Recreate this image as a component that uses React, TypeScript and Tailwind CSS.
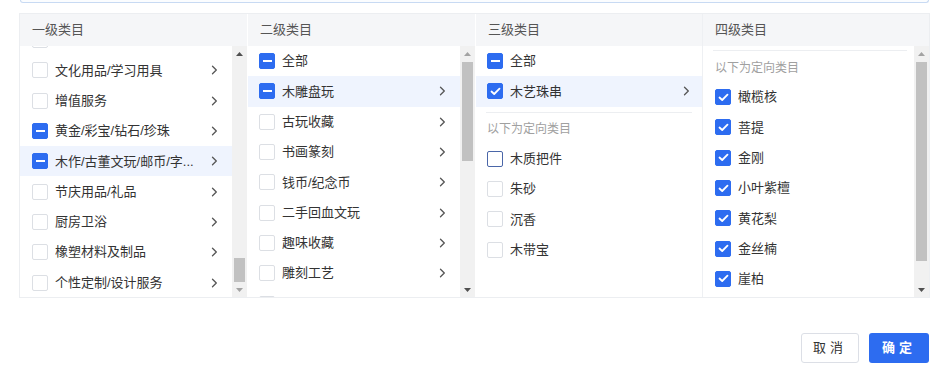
import React from 'react';

type CheckState = 'none' | 'half' | 'full' | 'hover';

type Item = {
  label: string;
  state: CheckState;
  arrow?: boolean;
  active?: boolean;
  title?: string;
};

const BLUE = 'bg-[#2d6cf0] border-[#2d6cf0]';

const CheckBox = ({ state }: { state: CheckState }) => {
  if (state === 'full') {
    return (
      <span className={`flex h-[16px] w-[16px] shrink-0 items-center justify-center rounded-[2px] border ${BLUE}`}>
        <svg width="11" height="9" viewBox="0 0 11 9" fill="none">
          <polyline points="1.5,4.5 4.2,7 9.5,1.6" stroke="#fff" strokeWidth="1.8" strokeLinecap="round" strokeLinejoin="round" />
        </svg>
      </span>
    );
  }
  if (state === 'half') {
    return (
      <span className={`flex h-[16px] w-[16px] shrink-0 items-center justify-center rounded-[2px] border ${BLUE}`}>
        <span className="h-[2px] w-[9px] bg-white" />
      </span>
    );
  }
  return (
    <span
      className={`h-[16px] w-[16px] shrink-0 rounded-[2px] border bg-white ${
        state === 'hover' ? 'border-[#4a66a8]' : 'border-[#dcdfe4]'
      }`}
    />
  );
};

const Chevron = () => (
  <svg width="7" height="10" viewBox="0 0 7 10" fill="none" className="shrink-0">
    <polyline points="1.5,1.2 5.3,5 1.5,8.8" stroke="#555" strokeWidth="1.3" strokeLinecap="round" strokeLinejoin="round" />
  </svg>
);

const Row = ({ item, pl = 'pl-[12px]', pr = 'pr-[14px]' }: { item: Item; pl?: string; pr?: string }) => (
  <div title={item.title} className={`flex h-[30.3px] items-center ${pl} ${pr} ${item.active ? 'bg-[#eff4fe]' : ''}`}>
    <CheckBox state={item.state} />
    <span className="ml-[7px] min-w-0 flex-1 truncate pr-[9px] text-[13px] text-[#333]">{item.label}</span>
    {item.arrow && <Chevron />}
  </div>
);

const Arrow = ({ up, dark }: { up?: boolean; dark?: boolean }) => (
  <div className="flex h-[15px] items-center justify-center">
    <svg width="7" height="4" viewBox="0 0 7 4">
      <polygon points={up ? '0,4 3.5,0 7,4' : '0,0 7,0 3.5,4'} fill={dark ? '#505050' : '#a3a3a3'} />
    </svg>
  </div>
);

// classic scrollbar; thumb placed by its top offset inside the track
const ScrollBar = ({ top, size, upDark, downDark }: { top: string; size: string; upDark?: boolean; downDark?: boolean }) => (
  <div className="flex w-[15px] shrink-0 flex-col bg-[#f1f1f1]">
    <Arrow up dark={upDark} />
    <div className="flex-1 px-[2px]">
      <div className={`${top} ${size} bg-[#c1c1c1]`} />
    </div>
    <Arrow dark={downDark} />
  </div>
);

const TargetLabel = () => (
  <div className="flex h-[31px] items-center pt-[2px] text-[12px] text-[#a0a0a0]">以下为定向类目</div>
);

const level1: Item[] = [
  { label: '', state: 'none' },
  { label: '文化用品/学习用具', state: 'none', arrow: true },
  { label: '增值服务', state: 'none', arrow: true },
  { label: '黄金/彩宝/钻石/珍珠', state: 'half', arrow: true },
  { label: '木作/古董文玩/邮币/字...', title: '木作/古董文玩/邮币/字画', state: 'half', arrow: true, active: true },
  { label: '节庆用品/礼品', state: 'none', arrow: true },
  { label: '厨房卫浴', state: 'none', arrow: true },
  { label: '橡塑材料及制品', state: 'none', arrow: true },
  { label: '个性定制/设计服务', state: 'none', arrow: true },
];

const level2: Item[] = [
  { label: '全部', state: 'half' },
  { label: '木雕盘玩', state: 'half', arrow: true, active: true },
  { label: '古玩收藏', state: 'none', arrow: true },
  { label: '书画篆刻', state: 'none', arrow: true },
  { label: '钱币/纪念币', state: 'none', arrow: true },
  { label: '二手回血文玩', state: 'none', arrow: true },
  { label: '趣味收藏', state: 'none', arrow: true },
  { label: '雕刻工艺', state: 'none', arrow: true },
  { label: '', state: 'none' },
];

const level3Top: Item[] = [
  { label: '全部', state: 'half' },
  { label: '木艺珠串', state: 'full', arrow: true, active: true },
];

const level3Target: Item[] = [
  { label: '木质把件', state: 'hover' },
  { label: '朱砂', state: 'none' },
  { label: '沉香', state: 'none' },
  { label: '木带宝', state: 'none' },
];

const level4: Item[] = ['橄榄核', '菩提', '金刚', '小叶紫檀', '黄花梨', '金丝楠', '崖柏'].map((label) => ({
  label,
  state: 'full' as CheckState,
}));

const Header = ({ title }: { title: string }) => (
  <div className="flex h-[32px] shrink-0 items-center bg-[#f5f6f8] pl-[12px] text-[13px] text-[#555]">{title}</div>
);

export default function App() {
  return (
    <div
      className="h-[374px] w-[951px] overflow-hidden bg-white"
      style={{ fontFamily: '"Liberation Sans", "Noto Sans CJK SC", sans-serif' }}
    >
      {/* bottom of the input above */}
      <div className="ml-[20px] h-[3px] w-[909px] rounded-b-[3px] border-x border-b border-[#c8daf3] bg-[#fbfdff]" />

      <div className="ml-[19px] mt-[10px] flex w-[911px] border border-[#eceef1]">
        {/* 一级 */}
        <div className="flex w-[228px] flex-col border-r border-white">
          <Header title="一级类目" />
          <div className="flex h-[251px]">
            <div className="min-w-0 flex-1 overflow-hidden">
              <div className="-mt-[21px]">
                {level1.map((it, i) => (
                  <Row key={i} item={it} />
                ))}
              </div>
            </div>
            <ScrollBar top="mt-[197px]" size="h-[24px]" upDark />
          </div>
        </div>

        {/* 二级 */}
        <div className="flex w-[228px] flex-col border-r border-white">
          <Header title="二级类目" />
          <div className="flex h-[251px]">
            <div className="min-w-0 flex-1 overflow-hidden">
              {level2.map((it, i) => (
                <Row key={i} item={it} pl="pl-[11px]" />
              ))}
            </div>
            <ScrollBar top="mt-[1px]" size="h-[99px]" downDark />
          </div>
        </div>

        {/* 三级 */}
        <div className="flex w-[227px] flex-col border-r border-[#eef0f3]">
          <Header title="三级类目" />
          <div className="h-[251px] overflow-hidden">
            {level3Top.map((it, i) => (
              <Row key={i} item={it} pl="pl-[11px]" pr="pr-[12px]" />
            ))}
            <div className="mx-[10px] mt-[5px] h-px bg-[#eceef1]" />
            <div className="pl-[11px]">
              <TargetLabel />
            </div>
            {level3Target.map((it, i) => (
              <Row key={i} item={it} pl="pl-[11px]" />
            ))}
          </div>
        </div>

        {/* 四级 */}
        <div className="flex w-[226px] flex-col">
          <Header title="四级类目" />
          <div className="flex h-[251px]">
            <div className="min-w-0 flex-1 overflow-hidden pt-[4px]">
              <div className="ml-[10px] mr-[7px] h-px bg-[#eceef1]" />
              <div className="pl-[12px]">
                <TargetLabel />
              </div>
              {level4.map((it, i) => (
                <Row key={i} item={it} />
              ))}
            </div>
            <ScrollBar top="mt-[1px]" size="h-[199px]" downDark />
          </div>
        </div>
      </div>

      <div className="mt-[35px] flex justify-end gap-[10px] pr-[22px]">
        <button className="h-[30px] w-[58px] rounded-[3px] border border-[#dcdfe6] bg-white text-[13px] tracking-[4px] text-[#333]">
          取消
        </button>
        <button className="h-[30px] w-[60px] rounded-[3px] bg-[#2d6cf0] text-[13px] font-bold tracking-[4px] text-white">
          确定
        </button>
      </div>
    </div>
  );
}
